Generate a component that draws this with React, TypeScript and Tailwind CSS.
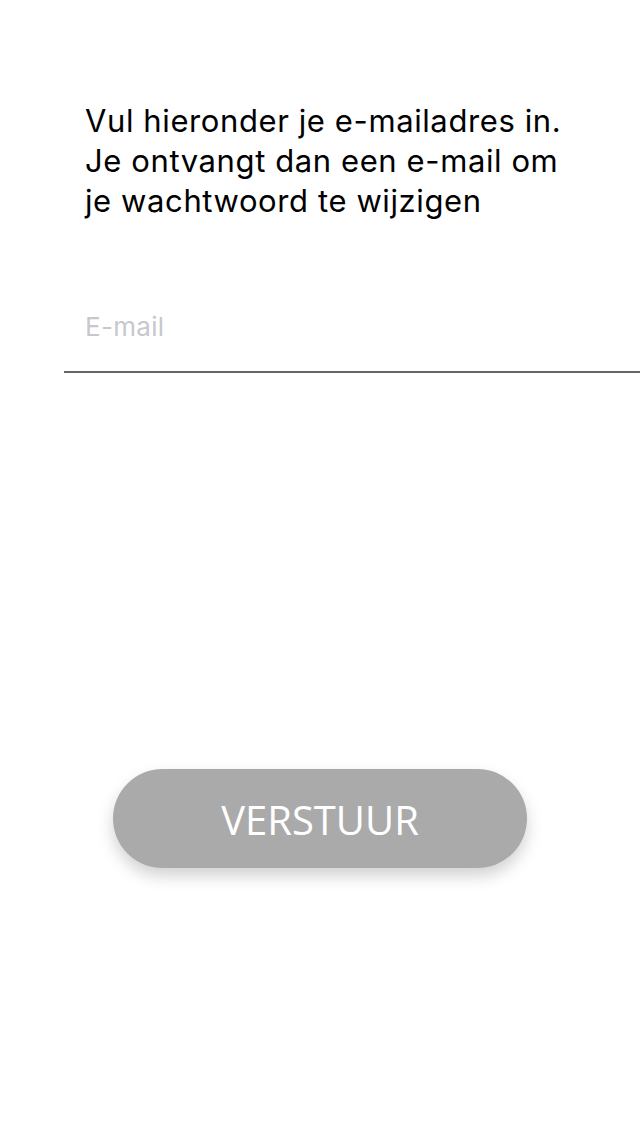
export default function App() {
  return (
    <div className="flex min-h-[1136px] w-[640px] flex-col bg-white">
      <div className="pl-[85px] pr-[20px] pt-[101px]">
        <p className="font-['Inter',sans-serif] text-[31px] leading-[40px] tracking-[0.6px] text-black">
          Vul hieronder je e-mailadres in.
          <br />
          Je ontvangt dan een e-mail om
          <br />
          je wachtwoord te wijzigen
        </p>
      </div>

      <div className="ml-[64px] mt-[88px] border-b-2 border-[#666666] pb-[26px] pl-[21px]">
        <input
          type="email"
          placeholder="E-mail"
          className="w-full bg-transparent font-['Inter',sans-serif] text-[26px] leading-[36px] tracking-[0.3px] text-black outline-none placeholder:text-[#c7c7cd]"
        />
      </div>

      <div className="mt-[396px] flex justify-center">
        <button
          type="button"
          className="h-[99px] w-[414px] rounded-full bg-[#aaaaaa] pt-[3px] font-['Open_Sans',sans-serif] text-[40px] text-white shadow-[0_8px_16px_rgba(0,0,0,0.18)]"
        >
          VERSTUUR
        </button>
      </div>
    </div>
  );
}
